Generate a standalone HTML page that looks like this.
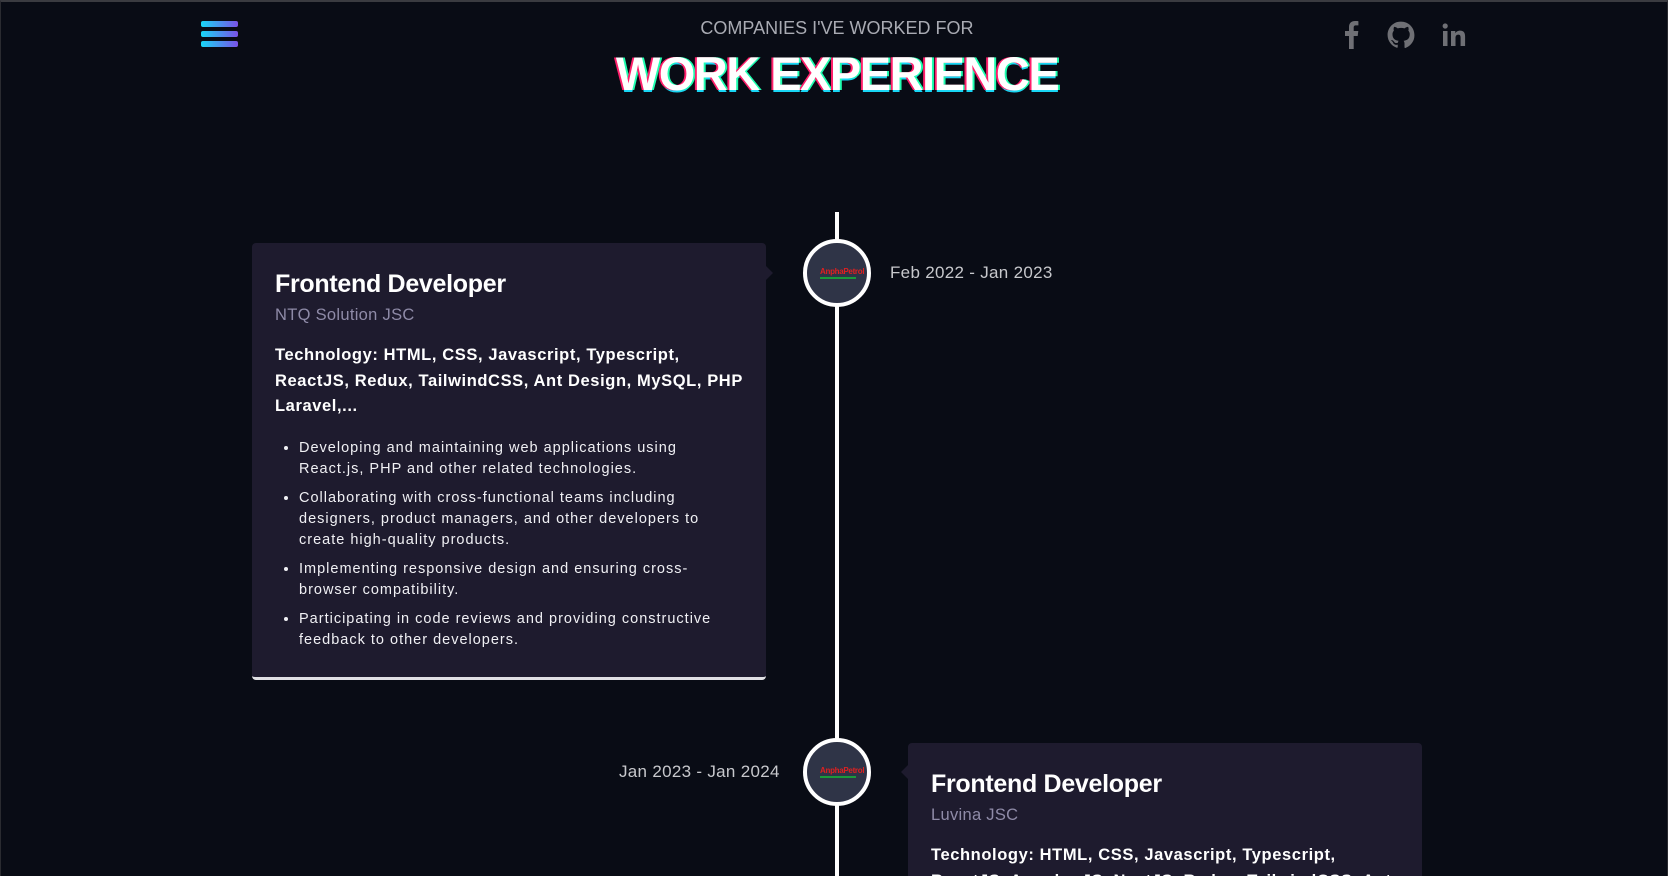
<!DOCTYPE html>
<html><head><meta charset="utf-8">
<style>
*{margin:0;padding:0;box-sizing:border-box}
html,body{width:1668px;height:876px;overflow:hidden;background:#090c15;font-family:"Liberation Sans",sans-serif;color:#fff}
body{border-top:2px solid #3a3b40;border-left:1px solid #2a2b30;border-right:1px solid #2a2b30;position:relative}
.ham{position:absolute;left:200px;top:19px;width:37px}
.ham i{display:block;height:6px;border-radius:2px;margin-bottom:4px;background:linear-gradient(90deg,#18d6f5,#7a52e8)}
.sub{position:absolute;left:0;width:1672px;text-align:center;top:16px;font-size:18px;color:#a9abb3;letter-spacing:0}
.title{position:absolute;left:0;width:1672px;text-align:center;top:44px;font-size:47px;font-weight:bold;letter-spacing:-1.5px;color:#fff;
text-shadow:-2px 0 #ff1f6b,2px 0 #1fffb0,0 2px #18d6f5}
.soc{position:absolute;top:18px;color:#6f7075}
.line{position:absolute;left:834px;top:210px;width:4px;height:680px;background:#fff}
.circ{position:absolute;width:68px;height:68px;border-radius:50%;border:4px solid #fff;background:#2f3447;left:802px}
.circ .lg{position:absolute;left:13px;top:24px;width:36px;font-size:8px;font-weight:bold;color:#e02020;text-align:center;border-bottom:2px solid #1a9a3a;line-height:10px;letter-spacing:-0.3px}
.date{position:absolute;font-size:17px;color:#c7c8cc;letter-spacing:0.3px}
.card{position:absolute;background:#1e1b2e;border-radius:4px;padding:0 23px;width:514px;overflow:hidden}
.card h2{font-size:25px;font-weight:bold;margin-top:27px;letter-spacing:-0.3px}
.card .co{font-size:16.5px;color:#8f8ba8;margin-top:7px;letter-spacing:0.3px}
.card .tech{font-size:16.5px;font-weight:bold;line-height:25.5px;margin-top:18px;letter-spacing:0.6px}
.card ul{margin-top:18px;padding-left:24px;font-size:14.5px;line-height:21px;letter-spacing:1px;color:#f0f0f4;padding-right:6px}
.card li{margin-bottom:8px}
.arrow{position:absolute;width:0;height:0;border-top:7px solid transparent;border-bottom:7px solid transparent}
</style></head><body>
<div class="ham"><i></i><i></i><i></i></div>
<div class="sub">COMPANIES I'VE WORKED FOR</div>
<div class="title">WORK EXPERIENCE</div>
<svg class="soc" style="left:1340px" width="22" height="30" viewBox="0 0 22 30"><path fill="#6f7075" d="M8 29V16H4v-5h4V7c0-4 2.5-6 6-6 1.7 0 3 .1 3.4.2v4.2h-2.4c-1.9 0-2.3.9-2.300 2.3V11h4.6l-.6 5h-4v13z"/></svg>
<svg class="soc" style="left:1386px" width="28" height="30" viewBox="0 0 24 24"><path fill="#6f7075" d="M12 .5C5.6.5.5 5.6.5 12c0 5.1 3.3 9.4 7.9 10.9.6.1.8-.2.8-.6v-2c-3.2.7-3.9-1.5-3.9-1.5-.5-1.3-1.3-1.7-1.3-1.7-1-.7.1-.7.1-.7 1.2.1 1.8 1.2 1.8 1.2 1 1.8 2.7 1.3 3.4 1 .1-.8.4-1.3.7-1.6-2.6-.3-5.3-1.3-5.3-5.7 0-1.3.5-2.3 1.2-3.1-.1-.3-.5-1.5.1-3.1 0 0 1-.3 3.2 1.2a11 11 0 0 1 5.8 0c2.2-1.5 3.2-1.2 3.2-1.2.6 1.6.2 2.8.1 3.1.7.8 1.2 1.8 1.2 3.1 0 4.4-2.7 5.4-5.3 5.7.4.4.8 1.1.8 2.2v3.3c0 .3.2.7.8.6A11.5 11.5 0 0 0 23.5 12C23.5 5.6 18.4.5 12 .5z"/></svg>
<svg class="soc" style="left:1440px" width="26" height="30" viewBox="0 0 26 30"><rect x="2" y="11" width="4.5" height="15" fill="#6f7075"/><circle cx="4.2" cy="6" r="2.6" fill="#6f7075"/><path fill="#6f7075" d="M10 11h4.3v2.2c.8-1.4 2.4-2.6 4.8-2.6 4 0 5 2.5 5 6V26h-4.5v-8.2c0-1.8-.4-3.2-2.3-3.2s-2.8 1.4-2.8 3.3V26H10z"/></svg>

<div class="line"></div>

<div class="circ" style="top:237px"><div class="lg">AnphaPetrol</div></div>
<div class="date" style="left:889px;top:261px">Feb 2022 - Jan 2023</div>
<div class="card" style="left:251px;top:241px;height:437px;border-bottom:3px solid #e0e0e4">
<h2>Frontend Developer</h2>
<div class="co">NTQ Solution JSC</div>
<div class="tech">Technology: HTML, CSS, Javascript, Typescript, ReactJS, Redux, TailwindCSS, Ant Design, MySQL, PHP Laravel,...</div>
<ul>
<li>Developing and maintaining web applications using React.js, PHP and other related technologies.</li>
<li>Collaborating with cross-functional teams including designers, product managers, and other developers to create high-quality products.</li>
<li>Implementing responsive design and ensuring cross-browser compatibility.</li>
<li>Participating in code reviews and providing constructive feedback to other developers.</li>
</ul>
</div>
<div class="arrow" style="left:765px;top:264px;border-left:7px solid #1e1b2e"></div>

<div class="circ" style="top:736px"><div class="lg">AnphaPetrol</div></div>
<div class="date" style="left:618px;top:760px">Jan 2023 - Jan 2024</div>
<div class="card" style="left:907px;top:741px;height:135px;border-radius:4px 4px 0 0">
<h2>Frontend Developer</h2>
<div class="co">Luvina JSC</div>
<div class="tech">Technology: HTML, CSS, Javascript, Typescript, ReactJS, Angular JS, NextJS, Redux, TailwindCSS, Ant Design</div>
</div>
<div class="arrow" style="left:900px;top:763px;border-right:7px solid #1e1b2e"></div>
</body></html>
